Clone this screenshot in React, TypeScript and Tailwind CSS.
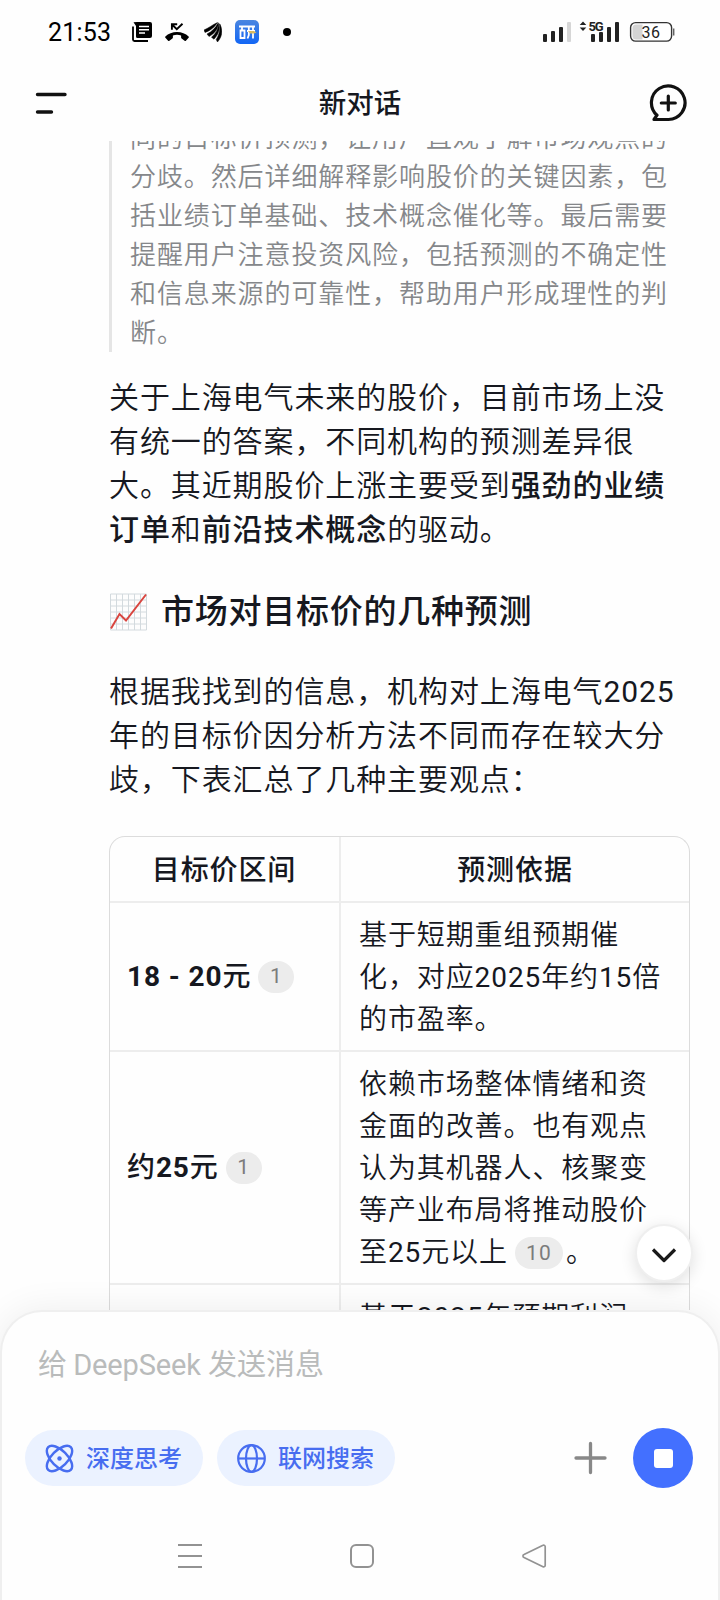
import type { ReactNode } from 'react';

const table = [
  {
    price: <><b className="font-bold">18 - 20</b>元</>,
    source: 1,
    lines: ['基于短期重组预期催', '化，对应2025年约15倍', '的市盈率。'],
  },
  {
    price: <>约<b className="font-bold">25</b>元</>,
    source: 1,
    lines: ['依赖市场整体情绪和资', '金面的改善。也有观点', '认为其机器人、核聚变', '等产业布局将推动股价'],
  },
];

// Digits carry a slightly heavier weight than the Chinese text around them
function Digits({ text }: { text: string }) {
  return (
    <>
      {text.split(/(\d+)/).map((part, i) =>
        i % 2 ? <span key={i} className="font-normal">{part}</span> : part
      )}
    </>
  );
}

function Badge({ children }: { children: ReactNode }) {
  return (
    <span className="inline-flex h-8 min-w-9 items-center justify-center rounded-full bg-[#ececec] px-[11px] align-middle text-[21px] font-normal leading-none tracking-[1.200px] text-[#7c7c7c]">
      {children}
    </span>
  );
}

function StatusBar() {
  return (
    <div className="flex h-16 shrink-0 items-center pl-[48px] pr-[45px] text-black">
      <span className="w-[84px] text-[25px] leading-none tracking-[0.200px]">21:53</span>
      <svg width="20" height="20" viewBox="0 0 20 20">
        <path d="M5 0h13a2 2 0 0 1 2 2v12a2 2 0 0 1-2 2H5.500A1.500 1.500 0 0 1 4 14.500V4L1.500.3 5 0Z" />
        <path d="M1 4.500v13A1.500 1.500 0 0 0 2.500 19H16" fill="none" stroke="#000" strokeWidth="1.800" />
        <path d="M7 4.500h10M7 7.700h10M7 10.900h6" stroke="#fff" strokeWidth="1.500" />
      </svg>
      <svg className="ml-[13px]" width="24" height="20" viewBox="0 0 24 20">
        <path d="M12 10c-4.500 0-8.700 1.600-11.600 4.500a1 1 0 0 0 0 1.300l2.700 2.900a1 1 0 0 0 1.300 0l3-2.300c.4-.3.5-.6.5-1v-2a15 15 0 0 1 8.200 0v2c0 .4.100.7.500 1l3 2.300c.4.300 1 .3 1.300 0l2.700-2.900a1 1 0 0 0 0-1.300C20.700 11.600 16.500 10 12 10Z" />
        <path d="M6.900 7.800V2.200h5.300M7 2.500l4.800 4.700 5.700-5.500" fill="none" stroke="#000" strokeWidth="1.900" />
      </svg>
      <svg className="ml-[15px]" width="18" height="20" viewBox="0 0 18 20" stroke="#000" strokeWidth=".5">
        <path d="M0 8C4 6.500 8 3 13.500.5 11 4.500 7 8.500 1 10.500Z" />
        <path d="M3 12C8 9.500 11.500 6 14.300.8 14.500 7 10.500 11.500 5 14.500Z" />
        <path d="M7.500 15.200C11.500 12 14 7.500 15 1.500c1.300 6-1 11.500-5 15.700Z" />
        <path d="M12.200 17.500c3-4.500 4-9.500 3.600-15.500C19 8 18.400 14.500 13.500 20Z" />
      </svg>
      <svg className="ml-[13px]" width="24" height="24" viewBox="0 0 24 24">
        <defs>
          <linearGradient id="app" x1="0" y1="0" x2="0" y2="1">
            <stop offset="0" stopColor="#4a86e0" />
            <stop offset="1" stopColor="#1266f5" />
          </linearGradient>
        </defs>
        <rect width="24" height="24" rx="5" fill="url(#app)" />
        <path d="M4 6.500h16M7 6.500v5M5.500 10.500v7.500h4v-7.500ZM13.800 6.500V15l-1.300 3.500M18 6.500v12M12 11h8" fill="none" stroke="#fff" strokeWidth="1.800" />
        <path d="M13 11h6l2.500 1.500-2.500 1h-4Z" fill="#d9b95f" />
      </svg>
      <span className="ml-[24px] size-2 rounded-full bg-black" />
      <svg className="ml-auto" width="132" height="24" viewBox="0 0 132 24" fill="#222">
        <rect x="0" y="14" width="4" height="8" rx="1" />
        <rect x="8" y="11" width="4" height="11" rx="1" />
        <rect x="16" y="7" width="4" height="15" rx="1" />
        <rect x="24" y="2" width="4" height="20" rx="1" fill="#d6d6d6" />
        <path d="m36.700 5 3.300-3.500L43.300 5ZM36.700 7.500 40 11l3.300-3.500Z" />
        <text x="45.500" y="11" fontSize="13" fontWeight="700" textLength="15">5G</text>
        <rect x="48" y="14" width="4" height="8" rx="1" />
        <rect x="56" y="12" width="4" height="10" rx="1" />
        <rect x="64" y="7" width="4" height="15" rx="1" />
        <rect x="72" y="2" width="4" height="20" rx="1" />
        <rect x="87.600" y="2.600" width="41" height="18.500" rx="5" fill="#fff" stroke="#333" strokeWidth="1.400" />
        <path d="M93 4.500h6.500v15H93a3.500 3.500 0 0 1-3.500-3.500V8A3.500 3.500 0 0 1 93 4.500Z" fill="#d4d4d4" />
        <path d="M130.300 8.500h1v7h-1z" />
        <text x="98.500" y="17.800" fontSize="16" letterSpacing=".5">36</text>
      </svg>
    </div>
  );
}

function Header() {
  return (
    <header className="flex h-[77px] shrink-0 items-center justify-between px-[33px]">
      <svg width="38" height="38" viewBox="0 0 38 38" stroke="#111" strokeWidth="3.400" strokeLinecap="round">
        <path d="M4.500 10.500h27.500M4.500 28h14" />
      </svg>
      <h1 className="pt-[3px] text-[27.500px] font-medium leading-none text-[#16181f]">新对话</h1>
      <svg width="38" height="38" viewBox="0 0 38 38" fill="none" stroke="#111" strokeWidth="3.200" strokeLinecap="round" strokeLinejoin="round">
        <path d="M19.500 35.500H5l3-4.300A16.800 16.800 0 1 1 19.500 35.500ZM19.300 12v14M12.300 19h14" />
      </svg>
    </header>
  );
}

function ChartEmoji() {
  return (
    <svg width="39" height="38" viewBox="0 0 38 38" fill="none">
      <path d="M1 1h36v36H1Z" fill="#fdfdfd" stroke="#d3dade" />
      <path d="M7 1v36M13 1v36M19 1v36M25 1v36M31 1v36M1 7h36M1 13h36M1 19h36M1 25h36M1 31h36" stroke="#d3dade" />
      <path d="m1.500 35.500 8.500-14.500 6.500 6.500L36.500 1.500" stroke="#d9453f" strokeWidth="2" />
    </svg>
  );
}

function Answer() {
  return (
    <main className="relative h-[1169px] shrink-0 overflow-hidden pl-[109px] text-[30px] font-[350] leading-[44px] tracking-[0.9px] text-[#16181f]">
      <blockquote className="-mt-[22px] h-[233px] whitespace-nowrap border-l-[3px] border-[#e5e5e5] pl-[18px] text-[26px] leading-[39px] text-[#85878a]">
        同的目标价预测，让用户直观了解市场观点的<br />
        分歧。然后详细解释影响股价的关键因素，包<br />
        括业绩订单基础、技术概念催化等。最后需要<br />
        提醒用户注意投资风险，包括预测的不确定性<br />
        和信息来源的可靠性，帮助用户形成理性的判<br />
        断。
      </blockquote>

      <p className="mt-[24px] whitespace-nowrap">
        关于上海电气未来的股价，目前市场上没<br />
        有统一的答案，不同机构的预测差异很<br />
        大。其近期股价上涨主要受到<b className="font-medium">强劲的业绩</b><br />
        <b className="font-medium">订单</b>和<b className="font-medium">前沿技术概念</b>的驱动。
      </p>

      <h2 className="mt-[36px] flex h-12 items-center gap-[13px] text-[33px] font-medium tracking-[0.750px]">
        <ChartEmoji />
        市场对目标价的几种预测
      </h2>

      <p className="mt-[34px] whitespace-nowrap">
        <Digits text="根据我找到的信息，机构对上海电气2025" /><br />
        年的目标价因分析方法不同而存在较大分<br />
        歧，下表汇总了几种主要观点：
      </p>

      <div className="mt-[34px] w-[581px] rounded-t-2xl border border-b-0 border-[#dcdcdc] text-[28px] leading-[42px]">
        <div className="flex h-[66px] border-b-2 border-[#ededed] text-center font-medium">
          <div className="flex w-[231px] items-center justify-center border-r-2 border-[#ededed] pr-px pt-[3px]">目标价区间</div>
          <div className="flex flex-1 items-center justify-center pt-[3px]">预测依据</div>
        </div>
        {table.map((row) => (
          <div key={row.lines[0]} className="flex border-b-2 border-[#ededed]">
            <div className="flex w-[231px] items-center border-r-2 border-[#ededed] pl-[17px] font-medium">
              <span>{row.price}</span>
              <span className="ml-[7px] flex">
                <Badge>{row.source}</Badge>
              </span>
            </div>
            <div className="whitespace-nowrap pb-[9px] pl-[18px] pt-[12px]">
              {row.lines.map((line) => (
                <div key={line}>
                  <Digits text={line} />
                </div>
              ))}
              {row.lines.length === 4 && (
                <div className="flex items-center">
                  <span>
                    <Digits text="至25元以上" />
                  </span>
                  <span className="ml-[7px] flex">
                    <Badge>10</Badge>
                  </span>
                  <span className="ml-[3px]">。</span>
                </div>
              )}
            </div>
          </div>
        ))}
        <div className="flex h-20">
          <div className="w-[231px] border-r-2 border-[#ededed]" />
          <div className="pl-[18px] pt-[12px]">
            <Digits text="基于2025年预期利润" />
          </div>
        </div>
      </div>

      <button className="absolute right-[27px] top-[1083px] flex size-[58px] items-center justify-center rounded-full border-2 border-[#efefef] bg-white shadow-[0_4px_16px_rgba(0,0,0,0.12)]">
        <svg className="mt-[3px]" width="26" height="16" viewBox="0 0 26 16" fill="none" stroke="#1a1a1a" strokeWidth="3.200" strokeLinejoin="round">
          <path d="m2 2.500 11 11 11-11" />
        </svg>
      </button>
    </main>
  );
}

function Composer() {
  return (
    <footer className="relative flex flex-1 flex-col rounded-t-[42px] border-2 border-b-0 border-[#efefef] bg-[#fefefe] shadow-[0_0_36px_rgba(0,0,0,0.07)]">
      <div className="mt-[31px] h-11 pl-[36px] text-[29px] leading-[44px] text-[#b9bbbb]">
        给 <span className="-ml-px tracking-[-0.150px]">DeepSeek</span> 发送消息
      </div>

      <div className="mt-[41px] flex h-[60px] items-center pl-[23px] pr-[25px]">
        <button className="flex h-14 w-[178px] items-center gap-[12px] rounded-full bg-[#ebf2ff] pl-5 text-2xl font-medium text-[#476df0]">
          <svg width="29" height="29" viewBox="0 0 29 29" fill="none" stroke="#476df0" strokeWidth="2.400">
            <ellipse cx="14.500" cy="14.500" rx="16" ry="8" transform="rotate(45 14.500 14.500)" />
            <ellipse cx="14.500" cy="14.500" rx="16" ry="8" transform="rotate(-45 14.500 14.500)" />
            <circle cx="14.500" cy="14.500" r="2.200" fill="#476df0" stroke="none" />
          </svg>
          <span className="pt-px">深度思考</span>
        </button>
        <button className="ml-[14px] flex h-14 w-[178px] items-center gap-[12px] rounded-full bg-[#ebf2ff] pl-5 text-2xl font-medium text-[#476df0]">
          <svg width="29" height="29" viewBox="0 0 29 29" fill="none" stroke="#476df0" strokeWidth="2.200">
            <circle cx="14.500" cy="14.500" r="13.300" />
            <ellipse cx="14.500" cy="14.500" rx="5.500" ry="13.300" />
            <path d="M1 14.500h27" />
          </svg>
          <span className="pt-px">联网搜索</span>
        </button>
        <svg className="ml-auto" width="34" height="34" viewBox="0 0 34 34" stroke="#888" strokeWidth="3.300" strokeLinecap="round">
          <path d="M17.500 2.500v29M3 17h29" />
        </svg>
        <button className="ml-[26px] flex size-[60px] items-center justify-center rounded-full bg-[#4370ff]">
          <span className="size-[19px] rounded-[3px] bg-white" />
        </button>
      </div>

      <nav className="mt-[55px] flex h-[26px] items-center justify-between pl-[175px] pr-[171px]">
        <svg width="26" height="26" viewBox="0 0 26 26" stroke="#929292" strokeWidth="2">
          <path d="M1 2h24M1 13h24M1 24h24" />
        </svg>
        <svg width="26" height="26" viewBox="0 0 26 26" fill="none" stroke="#929292" strokeWidth="2">
          <rect x="2" y="2" width="22" height="22" rx="5" />
        </svg>
        <svg width="26" height="26" viewBox="0 0 26 26" fill="none" stroke="#929292" strokeWidth="1.700" strokeLinejoin="round">
          <path d="M22 2.300 3 11.500a1.600 1.600 0 0 0 0 3l19 9.200a1.500 1.500 0 0 0 2.200-1.400V3.700A1.500 1.500 0 0 0 22 2.300Z" />
        </svg>
      </nav>
    </footer>
  );
}

export default function App() {
  return (
    <div className="flex h-[1600px] w-[720px] flex-col overflow-hidden bg-[#fefefe] font-[Roboto,'Noto_Sans_CJK_SC',sans-serif]">
      <StatusBar />
      <Header />
      <Answer />
      <Composer />
    </div>
  );
}
